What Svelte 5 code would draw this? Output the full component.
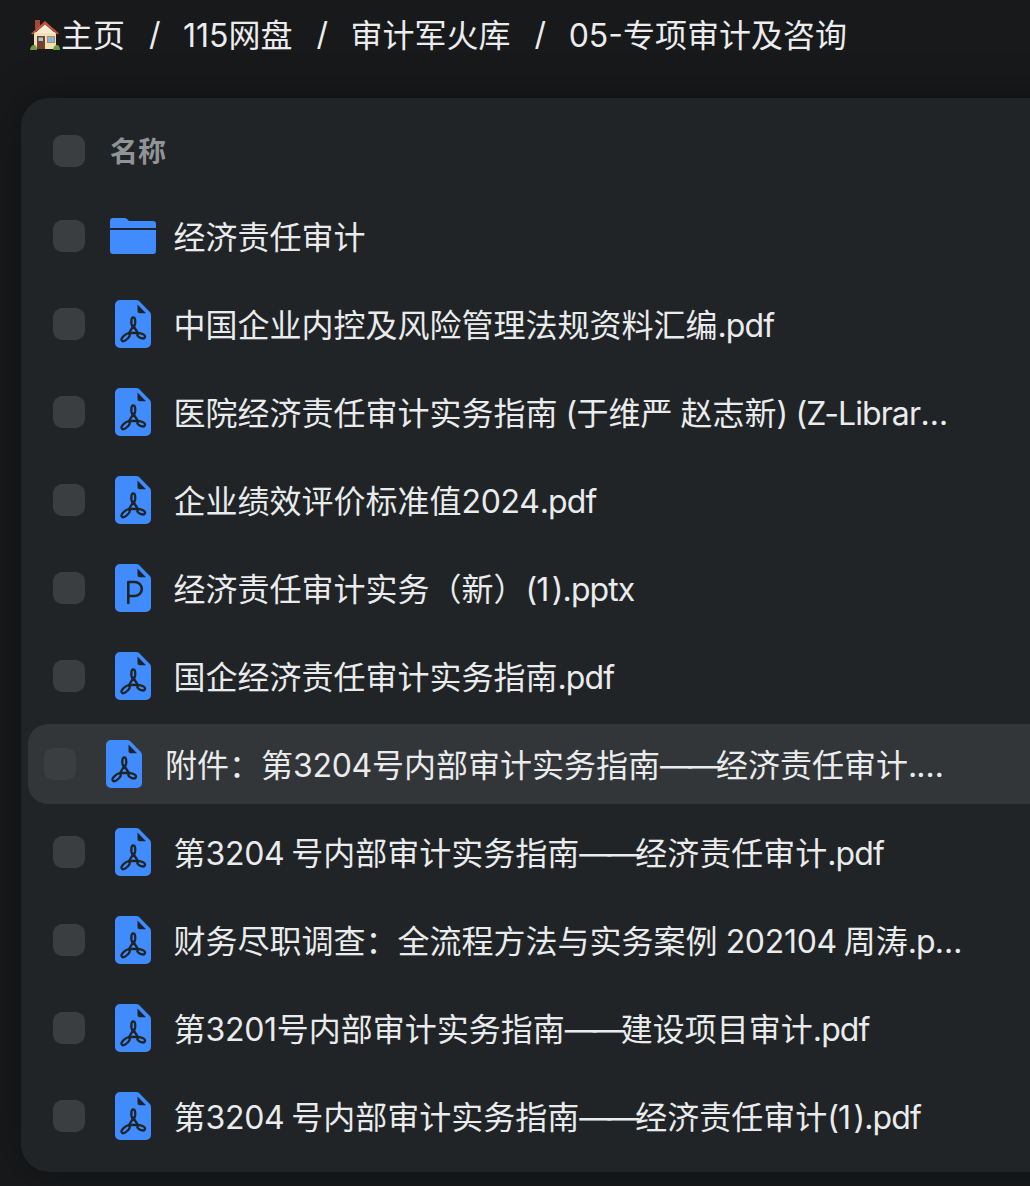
<script>
  const crumbs = ["主页", "115网盘", "审计军火库", "05-专项审计及咨询"];
  const rows = [
    { name: "经济责任审计", type: "folder" },
    { name: "中国企业内控及风险管理法规资料汇编.pdf", type: "pdf" },
    { name: "医院经济责任审计实务指南 (于维严 赵志新) (Z-Library).pdf", type: "pdf" },
    { name: "企业绩效评价标准值2024.pdf", type: "pdf" },
    { name: "经济责任审计实务（新）(1).pptx", type: "ppt" },
    { name: "国企经济责任审计实务指南.pdf", type: "pdf" },
    { name: "附件：第3204号内部审计实务指南——经济责任审计.pdf", type: "pdf", hover: true },
    { name: "第3204 号内部审计实务指南——经济责任审计.pdf", type: "pdf" },
    { name: "财务尽职调查：全流程方法与实务案例 202104 周涛.pdf", type: "pdf" },
    { name: "第3201号内部审计实务指南——建设项目审计.pdf", type: "pdf" },
    { name: "第3204 号内部审计实务指南——经济责任审计(1).pdf", type: "pdf" }
  ];

  // digits, latin and dash runs get their own spacing, the CJK around them stays as is
  const runs = (name) => name.split(/(\d+ ?|[\x20-\x2f\x3a-\x7e]+|—+)/).filter(Boolean);
  const runClass = (run) => {
    if (run[0] === "—") return "dash";
    if (run === "1") return "one";
    if (/\d/.test(run[0])) return "num";
    return run.charCodeAt(0) < 127 ? "lat" : "";
  };
</script>

<div class="page">
  <nav class="crumbs">
    <svg class="house" viewBox="0 0 30 30" width="30" height="30">
      <path d="M5 0h5v9H5z" fill="#a5473a" />
      <path d="M4 12h22v17H4z" fill="#f3dfb4" />
      <path d="M15 4 5 13h20z" fill="#f8ecd0" />
      <path d="M1 13.500 15 1l14 12.500-1.600 1L15 4.500 2.600 14.500z" fill="#c4503e" />
      <path d="M7 16h8v13H7z" fill="#74402c" />
      <path d="M8.500 17.500H13V21H8.500z" fill="#9cc8e8" />
      <path d="M17 16h8v7h-8z" fill="#b58d62" />
      <path d="M18 17h6v5h-6z" fill="#82b6de" />
      <path d="M0 30c0-3 2-5 4-5s3 2 3 5zM23 30c0-3 2-5 4-5s3 2 3 5z" fill="#6c9a45" />
    </svg>
    {#each crumbs as crumb, i}
      {#if i > 0}<span class="sep">/</span>{/if}
      <span>{crumb}</span>
    {/each}
  </nav>

  <section class="card">
    <div class="row head">
      <span class="check"></span>
      <span class="label">名称</span>
    </div>
    {#each rows as row}
      <div class="row" class:hover={row.hover}>
        <span class="check"></span>
        <span class="icon">
          {#if row.type === "folder"}
            <svg viewBox="0 0 46 36" width="46" height="36">
              <path d="M0 10V3a3 3 0 0 1 3-3h11c2 0 3 .8 4 2l1 1h24a3 3 0 0 1 3 3v4z" fill="#408cff" />
              <path d="M0 12h46v21a3 3 0 0 1-3 3H3a3 3 0 0 1-3-3z" fill="#408cff" />
            </svg>
          {:else}
            <svg viewBox="0 0 36 48" width="36" height="48">
              <path d="M5 0h16c1.500 0 2.600.5 3.600 1.500l9.800 10c1 1 1.600 2.300 1.600 3.800V43a5 5 0 0 1-5 5H5a5 5 0 0 1-5-5V5a5 5 0 0 1 5-5z" fill="#408cff" />
              <path d="M22.500 4.500 31 13.300h-6a2.500 2.500 0 0 1-2.500-2.500z" fill="#1f2326" />
              {#if row.type === "pdf"}
                <g fill="none" stroke="#1f2326" stroke-width="2.300" stroke-linejoin="round">
                  <ellipse cx="18.300" cy="21.800" rx="2" ry="4.400" />
                  <path d="M18.300 26 14 33h9z" />
                  <ellipse cx="10.600" cy="37.300" rx="5" ry="2.300" transform="rotate(-42 10.600 37.300)" />
                  <ellipse cx="26.200" cy="35.800" rx="4" ry="2.200" transform="rotate(22 26.200 35.800)" />
                </g>
              {:else}
                <path d="M13.300 39V18h6.500a7 7 0 0 1 0 14h-6.500" fill="none" stroke="#1f2326" stroke-width="2.600" stroke-linecap="round" stroke-linejoin="round" />
              {/if}
            </svg>
          {/if}
        </span>
        <span class="name">{#each runs(row.name) as run}<span class={runClass(run)}>{run}</span>{/each}</span>
      </div>
    {/each}
  </section>
</div>

<style>
  :global(body) {
    background: #17191b;
    overflow: hidden;
  }

  .page {
    height: 1186px;
    width: 1030px;
    overflow: hidden;
    font-family: Inter, "Noto Sans CJK SC", sans-serif;
  }

  .crumbs {
    display: flex;
    align-items: center;
    height: 66px;
    padding: 0 0 4px 30px;
    color: #ececee;
    font-size: 32px;
    white-space: nowrap;
  }

  .sep {
    margin: 0 22.500px 0 24px;
  }

  .house {
    margin: 4px 1px 0 0;
  }

  .card {
    width: 1100px;
    margin: 28px 0 0 21px;
    padding: 13px 0 11px;
    box-sizing: border-box;
    height: 1074px;
    background: #202426;
    border-radius: 28px;
    box-shadow: 0 0 40px rgba(0, 0, 0, 0.35);
  }

  .row {
    display: flex;
    align-items: center;
    height: 80px;
    margin: 8px 0 0 7px;
    padding-left: 25px;
    border-radius: 20px;
    color: #e9ebec;
    font-size: 32px;
  }

  .head {
    margin-top: 0;
    margin-bottom: -3px;
  }

  .hover {
    padding-left: 16px;
    background: #323639;
  }

  .hover .icon {
    margin-right: 18px;
  }

  .check {
    flex: none;
    width: 32px;
    height: 32px;
    border-radius: 9px;
    background: #3a3e41;
  }

  .label {
    margin: 0 0 2px 25px;
    color: #909497;
    font-size: 28px;
    font-weight: 600;
  }

  .icon {
    flex: none;
    display: flex;
    justify-content: center;
    width: 46px;
    margin: 0 17.500px 0 25px;
  }

  .name {
    width: 790px;
    padding-bottom: 2px;
    overflow: hidden;
    white-space: nowrap;
    text-overflow: ellipsis;
  }

  .lat {
    letter-spacing: -0.900px;
  }

  .num {
    letter-spacing: -0.300px;
    word-spacing: -2px;
  }

  .one {
    letter-spacing: 2.500px;
  }

  .dash {
    letter-spacing: -4px;
  }
</style>
